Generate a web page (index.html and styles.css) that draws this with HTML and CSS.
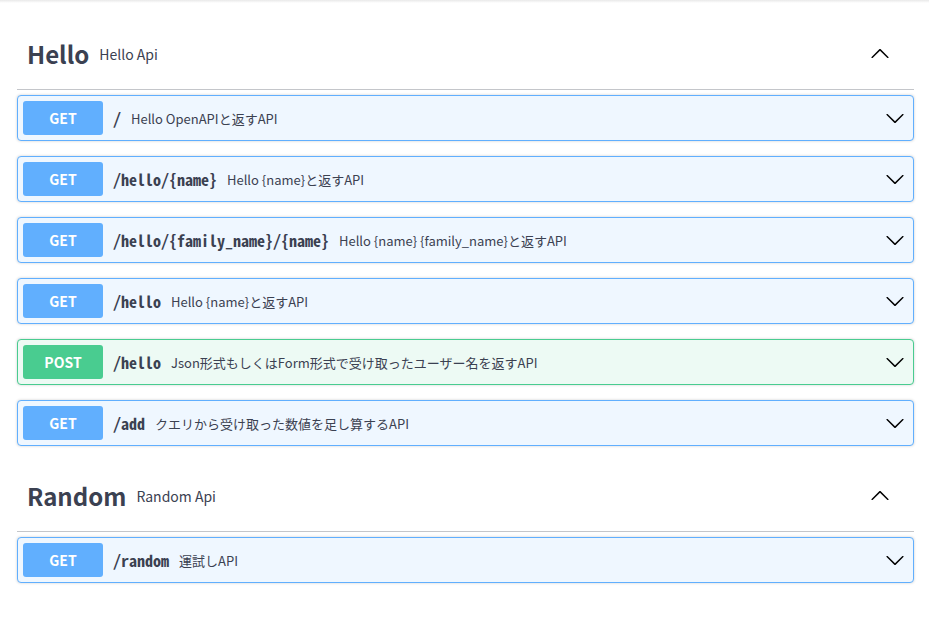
FILE: index.html
```html
<!DOCTYPE html>
<html lang="ja">
<head>
<meta charset="utf-8">
<title>Swagger UI</title>
<link rel="stylesheet" href="styles.css">
</head>
<body>
<div class="topshade"></div>
<div class="wrapper">
  <section class="tag-section">
    <h3 class="tag">
      <span class="tag-name">Hello</span>
      <small class="tag-desc">Hello Api</small>
      <svg class="arrow-up" width="20" height="20" viewBox="0 0 20 20"><path d="M17.418 6.109c.272-.268.709-.268.979 0s.271.701 0 .969l-7.908 7.83c-.27.268-.707.268-.979 0l-7.908-7.83c-.27-.268-.27-.701 0-.969.271-.268.709-.268.979 0L10 13.25l7.418-7.141z"/></svg>
    </h3>
    <div class="ops">
      <div class="op op-get">
        <span class="method">GET</span>
        <span class="path">/</span>
        <span class="desc">Hello OpenAPIと返すAPI</span>
        <svg class="arrow" width="20" height="20" viewBox="0 0 20 20"><path d="M17.418 6.109c.272-.268.709-.268.979 0s.271.701 0 .969l-7.908 7.83c-.27.268-.707.268-.979 0l-7.908-7.83c-.27-.268-.27-.701 0-.969.271-.268.709-.268.979 0L10 13.25l7.418-7.141z"/></svg>
      </div>
      <div class="op op-get">
        <span class="method">GET</span>
        <span class="path">/hello/{name}</span>
        <span class="desc">Hello {name}と返すAPI</span>
        <svg class="arrow" width="20" height="20" viewBox="0 0 20 20"><path d="M17.418 6.109c.272-.268.709-.268.979 0s.271.701 0 .969l-7.908 7.83c-.27.268-.707.268-.979 0l-7.908-7.83c-.27-.268-.27-.701 0-.969.271-.268.709-.268.979 0L10 13.25l7.418-7.141z"/></svg>
      </div>
      <div class="op op-get">
        <span class="method">GET</span>
        <span class="path">/hello/{family_name}/{name}</span>
        <span class="desc">Hello {name} {family_name}と返すAPI</span>
        <svg class="arrow" width="20" height="20" viewBox="0 0 20 20"><path d="M17.418 6.109c.272-.268.709-.268.979 0s.271.701 0 .969l-7.908 7.83c-.27.268-.707.268-.979 0l-7.908-7.83c-.27-.268-.27-.701 0-.969.271-.268.709-.268.979 0L10 13.25l7.418-7.141z"/></svg>
      </div>
      <div class="op op-get">
        <span class="method">GET</span>
        <span class="path">/hello</span>
        <span class="desc">Hello {name}と返すAPI</span>
        <svg class="arrow" width="20" height="20" viewBox="0 0 20 20"><path d="M17.418 6.109c.272-.268.709-.268.979 0s.271.701 0 .969l-7.908 7.83c-.27.268-.707.268-.979 0l-7.908-7.83c-.27-.268-.27-.701 0-.969.271-.268.709-.268.979 0L10 13.25l7.418-7.141z"/></svg>
      </div>
      <div class="op op-post">
        <span class="method">POST</span>
        <span class="path">/hello</span>
        <span class="desc">Json形式もしくはForm形式で受け取ったユーザー名を返すAPI</span>
        <svg class="arrow" width="20" height="20" viewBox="0 0 20 20"><path d="M17.418 6.109c.272-.268.709-.268.979 0s.271.701 0 .969l-7.908 7.83c-.27.268-.707.268-.979 0l-7.908-7.83c-.27-.268-.27-.701 0-.969.271-.268.709-.268.979 0L10 13.25l7.418-7.141z"/></svg>
      </div>
      <div class="op op-get">
        <span class="method">GET</span>
        <span class="path">/add</span>
        <span class="desc">クエリから受け取った数値を足し算するAPI</span>
        <svg class="arrow" width="20" height="20" viewBox="0 0 20 20"><path d="M17.418 6.109c.272-.268.709-.268.979 0s.271.701 0 .969l-7.908 7.83c-.27.268-.707.268-.979 0l-7.908-7.83c-.27-.268-.27-.701 0-.969.271-.268.709-.268.979 0L10 13.25l7.418-7.141z"/></svg>
      </div>
    </div>
  </section>
  <section class="tag-section">
    <h3 class="tag">
      <span class="tag-name">Random</span>
      <small class="tag-desc">Random Api</small>
      <svg class="arrow-up" width="20" height="20" viewBox="0 0 20 20"><path d="M17.418 6.109c.272-.268.709-.268.979 0s.271.701 0 .969l-7.908 7.83c-.27.268-.707.268-.979 0l-7.908-7.83c-.27-.268-.27-.701 0-.969.271-.268.709-.268.979 0L10 13.25l7.418-7.141z"/></svg>
    </h3>
    <div class="ops">
      <div class="op op-get">
        <span class="method">GET</span>
        <span class="path">/random</span>
        <span class="desc">運試しAPI</span>
        <svg class="arrow" width="20" height="20" viewBox="0 0 20 20"><path d="M17.418 6.109c.272-.268.709-.268.979 0s.271.701 0 .969l-7.908 7.83c-.27.268-.707.268-.979 0l-7.908-7.83c-.27-.268-.27-.701 0-.969.271-.268.709-.268.979 0L10 13.25l7.418-7.141z"/></svg>
      </div>
    </div>
  </section>
</div>
</body>
</html>
```
FILE: styles.css
```css
html, body {
  margin: 0;
  padding: 0;
  background: #fff;
}
body {
  font-family: "Noto Sans CJK JP", "Noto Sans", sans-serif;
  color: #3b4151;
}
.topshade {
  height: 3px;
  background: linear-gradient(#e9e9e9, #fff);
}
.wrapper {
  width: 897px;
  margin-left: 17px;
  padding-top: 16px;
}
.tag-section {
  display: flex;
  flex-direction: column;
}
.tag {
  display: flex;
  align-items: center;
  box-sizing: border-box;
  height: 71px;
  margin: 0 0 5px;
  padding: 0 24px 0 10px;
  border-bottom: 1px solid rgba(59, 65, 81, 0.3);
  font-size: 24px;
  font-weight: 700;
  color: #3b4151;
}
.tag-name {
  line-height: 1;
}
.tag-desc {
  flex: 1;
  padding: 0 10px;
  font-size: 14px;
  font-weight: 400;
}
.arrow-up {
  transform: rotate(180deg);
  fill: #000;
}
.ops {
  display: flex;
  flex-direction: column;
}
.op {
  display: flex;
  align-items: center;
  box-sizing: border-box;
  height: 46px;
  padding: 5px;
  margin: 0 0 15px;
  border: 1px solid #61affe;
  border-radius: 4px;
  background: #eff7ff;
  box-shadow: 0 0 3px rgba(0, 0, 0, 0.19);
}
.op-post {
  border-color: #49cc90;
  background: #edfaf4;
}
.method {
  display: flex;
  align-items: center;
  justify-content: center;
  width: 80px;
  height: 34px;
  flex: none;
  border-radius: 3px;
  background: #61affe;
  color: #fff;
  font-size: 14px;
  font-weight: 700;
}
.op-post .method {
  background: #49cc90;
}
.path {
  padding: 0 10px;
  font-family: "Noto Sans Mono CJK JP", "DejaVu Sans Mono", monospace;
  font-size: 16px;
  font-weight: 700;
  color: #3b4151;
}
.desc {
  flex: 1;
  font-size: 13px;
  color: #3b4151;
}
.arrow {
  flex: none;
  margin-right: 3px;
  fill: #000;
}
```
